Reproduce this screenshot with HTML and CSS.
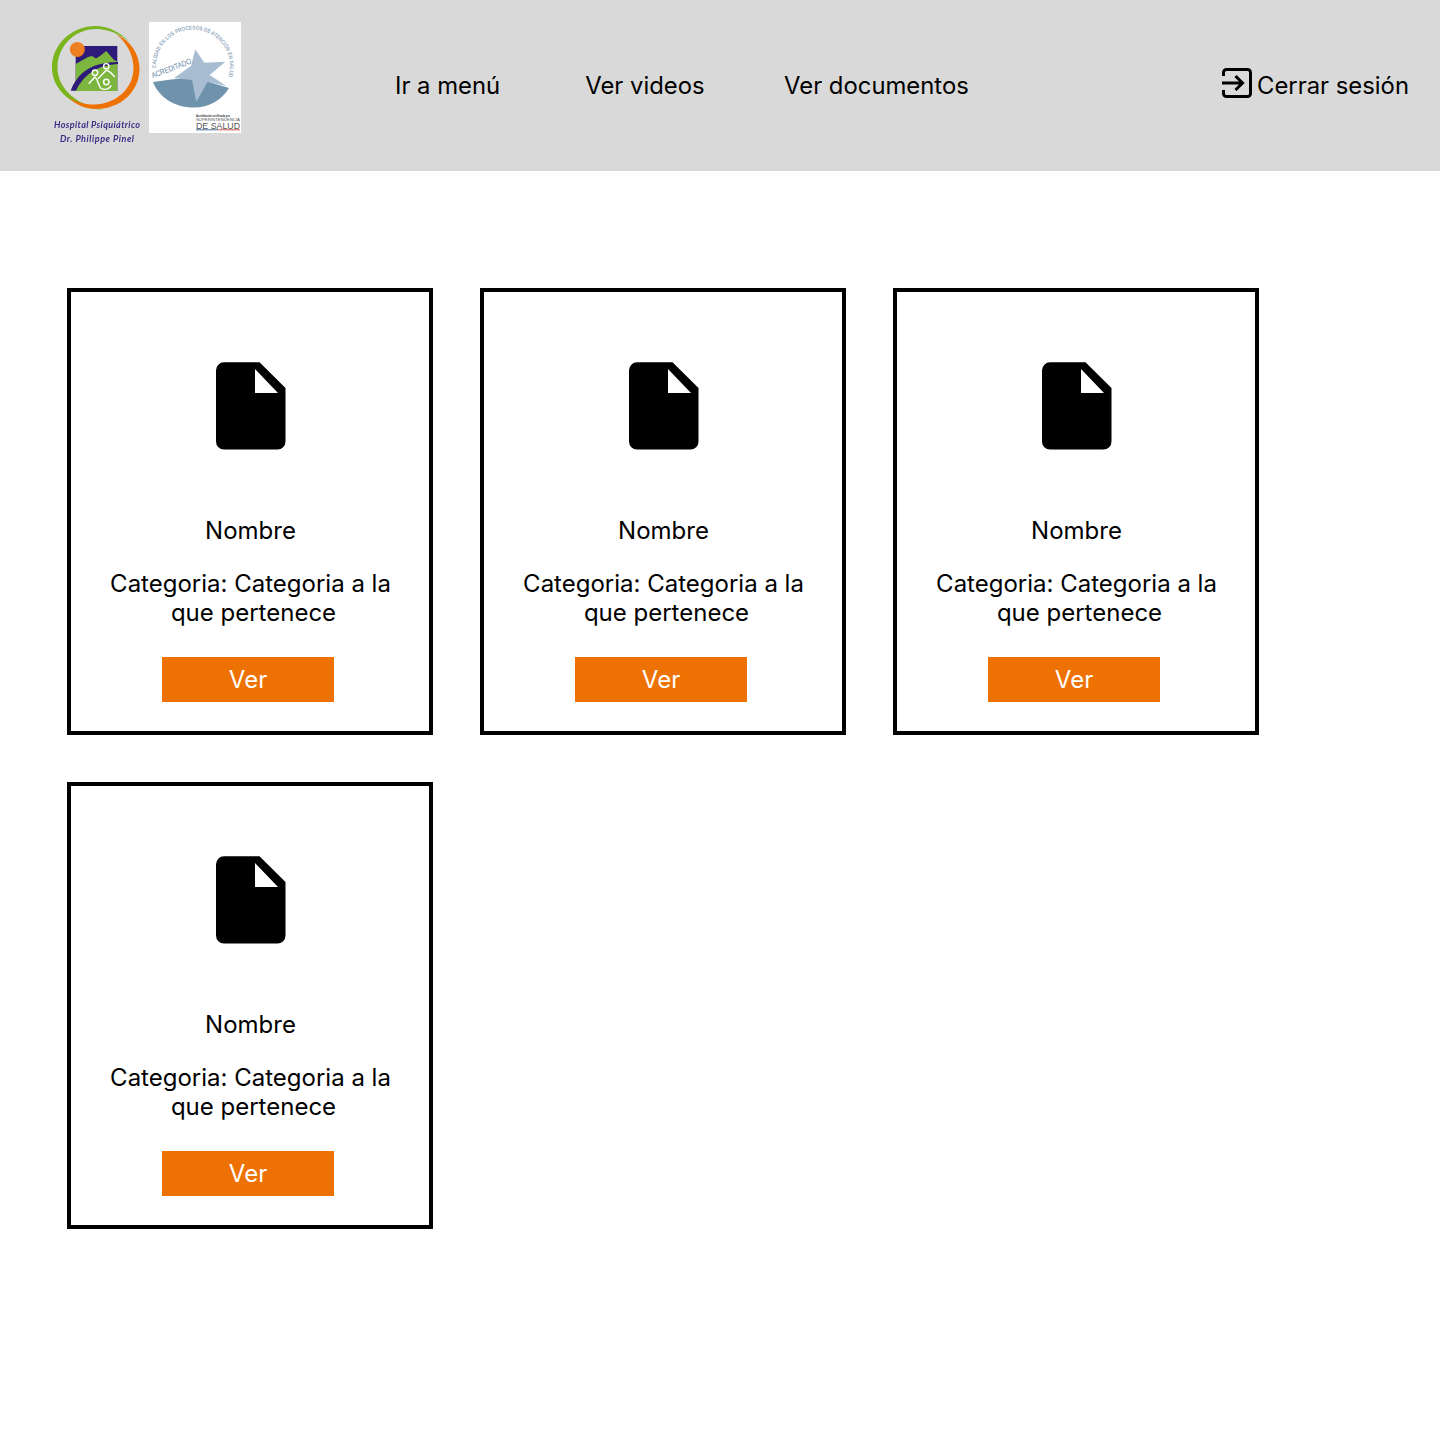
FILE: index.html
```html
<!DOCTYPE html>
<html lang="es">
<head>
    <meta charset="UTF-8">
    <meta name="viewport" content="width=device-width, initial-scale=1.0">
    <title>Documentos</title>
    <link rel="stylesheet" href="styles.css">
</head>
<body>
    <header class="topbar">
        <div class="logos">
            <svg class="logo-hospital" viewBox="0 0 95 125" width="95" height="125">
                <path fill="#7ab51d" d="M80 18.500C69 7 57 2 46 2C21 2 2 21 2 43.500C2 66 23 85 54 85.700C29 82 7.500 66 7.500 43.500C7.500 23 24 5 46 5C58 5 70 10 80 18.500Z"/>
                <path fill="#ee7203" d="M66 10C81 17 89.500 30 89.500 45C89.500 67 71 85 46 85C35 85 26 81 18 73C26 78 35 80.500 44 80.500C66 80.500 83.500 64 83.500 44C83.500 31 77 19 66 10Z"/>
                <rect x="25.700" y="22" width="41.600" height="45" fill="#2e1a78"/>
                <path fill="#7cb63f" d="M25.700 67V40L38 33L42 32L46 34.500L50 32L56.300 27L64 36L67.300 37.500V67Z"/>
                <path fill="#2e1a78" d="M20.700 66.700C28 48 42 38.500 68 38V40C50 41 35 48 26 66.700Z"/>
                <circle cx="27.300" cy="25.500" r="7.500" fill="#ee7f22"/>
                <g fill="none" stroke="#fff" stroke-width="1.400">
                    <circle cx="45" cy="48.700" r="2.700"/>
                    <circle cx="56.300" cy="42.300" r="2.700"/>
                    <circle cx="56.300" cy="58" r="2.700"/>
                    <path d="M38.700 59.700L45 53C48 55 48 62 51.300 64.700C55 66 59 65 61.300 61.300"/>
                    <path d="M48 54.700L56.300 46.300C60 47 62 50 64.700 53"/>
                </g>
                <text class="logo-caption" x="47" y="104" text-anchor="middle" textLength="86">Hospital Psiquiátrico</text>
                <text class="logo-caption" x="47" y="118" text-anchor="middle" textLength="74">Dr. Philippe Pinel</text>
            </svg>
            <svg class="logo-acreditado" viewBox="0 0 92 111" width="92" height="111">
                <rect width="92" height="111" fill="#fff"/>
                <path fill="#6f93ad" d="M4 60C20 58 30 56 44 56L60 60L80 66C73 78 60 85.500 45 85.500C25 85.500 10 75 4 60Z"/>
                <path fill="#a9bdd2" d="M46.300 27.300L55.300 40.700L76.300 39.700L60.700 53L77.300 64L58.700 59.700L47.300 79.700L43 58L25 56L42 44Z"/>
                <path id="arcPath" fill="none" d="M7 46A37 37 0 1 1 78 59"/>
                <text class="arc-text" textLength="128" lengthAdjust="spacingAndGlyphs"><textPath href="#arcPath">CALIDAD EN LOS PROCESOS DE ATENCIÓN EN SALUD</textPath></text>
                <text class="acreditado-text" x="3.700" y="56.300" transform="rotate(-21 3.700 56.300)" textLength="42" lengthAdjust="spacingAndGlyphs">ACREDITADO</text>
                <text class="small-note small-note-bold" x="47" y="95" textLength="34" lengthAdjust="spacingAndGlyphs">Acreditación certificada por</text>
                <text class="small-note" x="47" y="99" textLength="44" lengthAdjust="spacingAndGlyphs">SUPERINTENDENCIA</text>
                <text class="desalud" x="47" y="106.700" textLength="44" lengthAdjust="spacingAndGlyphs">DE SALUD</text>
                <rect x="47" y="107.300" width="22" height="1" fill="#4a6fa5"/>
                <rect x="69" y="107.300" width="22" height="1" fill="#d0584f"/>
            </svg>
        </div>
        <nav class="menu">
            <a class="menu-item menu-home" href="#">Ir a menú</a>
            <a class="menu-item menu-videos" href="#">Ver videos</a>
            <a class="menu-item" href="#">Ver documentos</a>
        </nav>
        <a class="logout" href="#">
            <svg viewBox="0 0 30 30" width="30" height="30" fill="none" stroke="#000" stroke-width="3">
                <path d="M1.500 8V4.500a3 3 0 0 1 3-3H25.500a3 3 0 0 1 3 3V25.500a3 3 0 0 1-3 3H4.500a3 3 0 0 1-3-3V22"/>
                <path d="M0 15H20M13.500 8L20.500 15L13.500 22"/>
            </svg>
            <span>Cerrar sesión</span>
        </a>
    </header>

    <main class="doc-grid">
        <article class="doc-card">
            <svg class="doc-icon" viewBox="0 0 70 88" width="70" height="88"><path fill-rule="evenodd" d="M8 .3H43.500L69.500 26V79.500a8 8 0 0 1-8 8H8a8 8 0 0 1-8-8V8.300a8 8 0 0 1 8-8zM39 7V31H62z"/></svg>
            <p class="doc-name">Nombre</p>
            <p class="doc-cat">Categoria: Categoria a la <span class="doc-cat-rest">que pertenece</span></p>
            <a class="doc-btn" href="#">Ver</a>
        </article>
        <article class="doc-card">
            <svg class="doc-icon" viewBox="0 0 70 88" width="70" height="88"><path fill-rule="evenodd" d="M8 .3H43.500L69.500 26V79.500a8 8 0 0 1-8 8H8a8 8 0 0 1-8-8V8.300a8 8 0 0 1 8-8zM39 7V31H62z"/></svg>
            <p class="doc-name">Nombre</p>
            <p class="doc-cat">Categoria: Categoria a la <span class="doc-cat-rest">que pertenece</span></p>
            <a class="doc-btn" href="#">Ver</a>
        </article>
        <article class="doc-card">
            <svg class="doc-icon" viewBox="0 0 70 88" width="70" height="88"><path fill-rule="evenodd" d="M8 .3H43.500L69.500 26V79.500a8 8 0 0 1-8 8H8a8 8 0 0 1-8-8V8.300a8 8 0 0 1 8-8zM39 7V31H62z"/></svg>
            <p class="doc-name">Nombre</p>
            <p class="doc-cat">Categoria: Categoria a la <span class="doc-cat-rest">que pertenece</span></p>
            <a class="doc-btn" href="#">Ver</a>
        </article>
        <article class="doc-card">
            <svg class="doc-icon" viewBox="0 0 70 88" width="70" height="88"><path fill-rule="evenodd" d="M8 .3H43.500L69.500 26V79.500a8 8 0 0 1-8 8H8a8 8 0 0 1-8-8V8.300a8 8 0 0 1 8-8zM39 7V31H62z"/></svg>
            <p class="doc-name">Nombre</p>
            <p class="doc-cat">Categoria: Categoria a la <span class="doc-cat-rest">que pertenece</span></p>
            <a class="doc-btn" href="#">Ver</a>
        </article>
    </main>
</body>
</html>
```

FILE: styles.css
```css
body {
    margin: 0;
    min-height: 1437px;
    background-color: #fff;
    color: #000;
    font-family: Inter, "Liberation Sans", sans-serif;
    font-size: 24px;
    line-height: 29px;
}

a {
    color: inherit;
    text-decoration: none;
}

.topbar {
    display: flex;
    height: 171px;
    background-color: #d9d9d9;
    padding-left: 50px;
    padding-right: 31px;
    font-size: 23.850px;
}

.logos {
    display: flex;
    align-items: flex-start;
    gap: 4px;
    filter: blur(0.3px);
}

.logo-hospital {
    margin-top: 24px;
}

.logo-acreditado {
    margin-top: 22px;
}

.logo-caption {
    font-family: Lato, sans-serif;
    font-size: 9px;
    font-style: italic;
    font-weight: 700;
    fill: #3d2d86;
}

.arc-text {
    font-family: "Liberation Sans", sans-serif;
    font-size: 5.600px;
    font-weight: 700;
    fill: #98adbf;
}

.acreditado-text {
    font-family: "Liberation Sans", sans-serif;
    font-size: 8px;
    fill: #5f86a5;
}

.small-note {
    font-family: "Liberation Sans", sans-serif;
    font-size: 3.400px;
    fill: #555;
}

.small-note-bold {
    font-weight: 700;
    fill: #333;
}

.desalud {
    font-family: "Liberation Sans", sans-serif;
    font-size: 9px;
    fill: #555;
}

.menu {
    display: flex;
    margin-left: 154px;
    padding-top: 71px;
}

.menu-home {
    margin-right: 85px;
}

.menu-videos {
    margin-right: 79.500px;
}

.logout {
    display: flex;
    align-items: flex-start;
    gap: 5px;
    margin-left: auto;
    padding-top: 68px;
}

.logout span {
    padding-top: 3px;
}

.doc-grid {
    display: grid;
    grid-template-columns: repeat(3, 366px);
    gap: 47px;
    padding: 117px 0 0 67px;
}

.doc-card {
    display: flex;
    flex-direction: column;
    box-sizing: border-box;
    height: 447px;
    padding: 70px 30px 0 31px;
    border: 4px solid #000;
    text-align: center;
}

.doc-icon {
    align-self: center;
    margin-left: 1px;
    margin-bottom: 65.500px;
}

.doc-name {
    margin: 0 0 24px;
}

.doc-cat {
    margin: 0 0 30.500px;
}

.doc-cat-rest {
    display: inline-block;
    margin-left: 6px;
}

.doc-btn {
    align-self: flex-start;
    width: 172px;
    height: 45px;
    margin-left: 60px;
    background-color: #ee7203;
    color: #fff;
    line-height: 45px;
}
```
